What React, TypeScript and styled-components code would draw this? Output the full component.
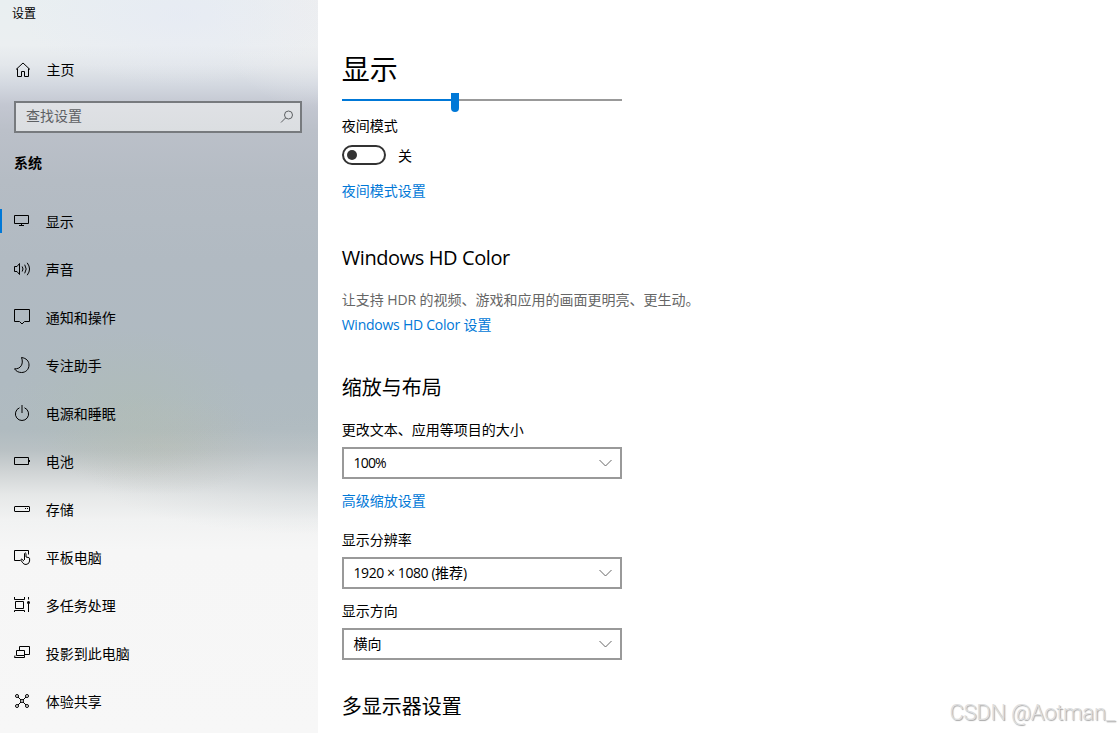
import React from "react";
import styled, { createGlobalStyle } from "styled-components";

const GlobalStyle = createGlobalStyle`
  * {
    box-sizing: border-box;
  }
  body {
    margin: 0;
    background: #fff;
    overflow: hidden;
    font-family: "Open Sans", "Noto Sans CJK SC", sans-serif;
    font-size: 14px;
    line-height: 20px;
    color: #000;
  }
`;

const Window = styled.div`
  display: flex;
  width: 1120px;
  height: 733px;
  overflow: hidden;
  position: relative;
  background: #fff;
`;

const Sidebar = styled.aside`
  width: 318px;
  height: 733px;
  flex: none;
  display: flex;
  flex-direction: column;
  font-family: "Noto Sans CJK SC", sans-serif;
  background:
    radial-gradient(ellipse 120px 75px at 130px 405px, rgba(176, 190, 176, 0.4), rgba(176, 190, 176, 0)),
    radial-gradient(ellipse 110px 50px at 160px 445px, rgba(186, 188, 176, 0.35), rgba(186, 188, 176, 0)),
    radial-gradient(ellipse 160px 70px at 180px 15px, rgba(229, 233, 245, 0.6), rgba(229, 233, 245, 0)),
    radial-gradient(ellipse 110px 110px at 318px 0, rgba(238, 238, 240, 0.8), rgba(238, 238, 240, 0)),
    radial-gradient(ellipse 240px 60px at 330px 475px, rgba(190, 198, 203, 0.4), rgba(190, 198, 203, 0)),
    linear-gradient(
      to bottom,
      #e9eff1 0,
      #ebeff1 45px,
      #e3e7eb 65px,
      #d3d8e0 85px,
      #c3c7d1 105px,
      #bbc0c9 130px,
      #b5bcc4 180px,
      #b1bac2 260px,
      #afbac1 380px,
      #b0bbc0 430px,
      #b9c1c4 450px,
      #d0d4d5 472px,
      #e6e8e8 495px,
      #f1f2f2 520px,
      #f6f6f6 550px,
      #f7f7f7 733px
    );
`;

const WindowTitle = styled.div`
  height: 28px;
  padding-left: 12px;
  font-size: 12px;
  line-height: 26px;
`;

const HomeLink = styled.div`
  display: flex;
  align-items: center;
  height: 24px;
  margin-top: 30px;
  padding-left: 14px;
  gap: 14.5px;
`;

const SearchBox = styled.div`
  display: flex;
  align-items: center;
  justify-content: space-between;
  width: 288px;
  height: 32px;
  margin: 19px 0 0 14px;
  padding: 0 4px 2px 10px;
  border: 2px solid #777a7e;
  background: linear-gradient(to bottom, #dfe1e5, #dbdee1);
  color: #5d6063;
`;

const GroupTitle = styled.div`
  margin: 19px 0 25px;
  padding-left: 14px;
  font-weight: 700;
`;

const NavItem = styled.div<{ $active?: boolean }>`
  display: flex;
  align-items: center;
  height: 48px;
  flex: none;
  gap: 13.7px;
  padding-left: 14px;
  background: ${({ $active }) =>
    $active ? "linear-gradient(#0078d7, #0078d7) 0 12px / 2px 24px no-repeat" : "none"};
`;

const NavLabel = styled.span<{ $raise?: number }>`
  margin-top: ${({ $raise = 1 }) => -$raise}px;
`;

const Icon = styled.svg<{ $muted?: boolean }>`
  width: 18px;
  height: 18px;
  flex: none;
  fill: none;
  stroke: ${({ $muted }) => ($muted ? "#5d6063" : "#000")};
  stroke-width: 1;
`;

const Content = styled.main`
  flex: 1;
  display: flex;
  flex-direction: column;
  align-items: flex-start;
  padding: 49px 0 0 23.7px;
`;

const PageTitle = styled.h1`
  margin: 0;
  font-size: 28px;
  font-weight: 400;
  line-height: 40px;
`;

const Slider = styled.div`
  display: flex;
  align-items: flex-start;
  width: 280px;
  height: 20px;
  margin: 4px 0 3px 0.3px;
`;

const SliderTrack = styled.div<{ $filled?: boolean }>`
  flex: ${({ $filled }) => ($filled ? "0 0 109px" : "1")};
  height: 2px;
  margin-top: 6px;
  background: ${({ $filled }) => ($filled ? "#0078d7" : "#999")};
`;

const SliderThumb = styled.div`
  width: 8px;
  height: 19px;
  border-radius: 0 0 4px 4px;
  background: #0078d7;
`;

const Text = styled.div<{ $top?: number; $muted?: boolean }>`
  height: 20px;
  margin-top: ${({ $top = 0 }) => $top}px;
  color: ${({ $muted }) => ($muted ? "#666" : "#000")};
  white-space: nowrap;
`;

const SettingLink = styled.a<{ $top: number }>`
  height: 20px;
  margin-top: ${({ $top }) => $top}px;
  color: #0078d7;
  white-space: nowrap;
`;

const Latin = styled.span<{ $spacing?: number }>`
  letter-spacing: ${({ $spacing = -0.2 }) => $spacing}px;
`;

const SectionTitle = styled.h2<{ $top: number }>`
  height: 28px;
  margin: ${({ $top }) => $top}px 0 0;
  font-size: 20px;
  font-weight: 400;
  line-height: 28px;
`;

const ToggleRow = styled.div`
  display: flex;
  align-items: center;
  gap: 12px;
  height: 20px;
  margin: 9px 0 0 0.3px;
`;

const Toggle = styled.div`
  display: flex;
  align-items: center;
  width: 44px;
  height: 20px;
  padding-left: 3px;
  border: 2px solid #333;
  border-radius: 10px;
`;

const ToggleKnob = styled.div`
  width: 10px;
  height: 10px;
  border-radius: 50%;
  background: #333;
`;

const ToggleState = styled.span`
  padding-top: 2px;
`;

const Select = styled.div`
  display: flex;
  align-items: center;
  justify-content: space-between;
  width: 280px;
  height: 32px;
  margin: 7px 0 0 0.3px;
  padding: 0 8px 0 9.5px;
  border: 2px solid #999;
`;

const Chevron = styled.svg`
  width: 13px;
  height: 8px;
  fill: none;
  stroke: #666;
`;

const Watermark = styled.div`
  position: absolute;
  right: 5px;
  bottom: 6px;
  font-family: Roboto, sans-serif;
  font-size: 22px;
  font-weight: 300;
  line-height: 28px;
  letter-spacing: -0.25px;
  color: #dedede;
  text-shadow: 1px 1px 1px #a4a4a4;
`;

const navItems = [
  {
    label: "显示",
    icon: <path d="M.5 3.5h14v8H.5zM7.5 12v1.5M5 13.5h5" />,
  },
  {
    label: "声音",
    icon: (
      <path d="M.5 6.5H3l2.5-3v11l-2.5-3H.5zM8.2 6.5q1.6 2.5 0 5M10.7 4.7q3 4.3 0 8.6M13.2 2.8q4.7 6.2 0 12.4" />
    ),
  },
  {
    label: "通知和操作",
    icon: <path d="M.5 1.5h15v12h-5L8 16l-2.5-2.5h-5z" />,
  },
  {
    label: "专注助手",
    icon: <path d="M7.5 1.5C12.5 2.2 15 5.2 15 9c0 4.5-3.3 7.5-7.5 7.5-3 0-5.5-1.3-7-3.7C6.5 13.3 10 8 7.5 1.5z" />,
  },
  {
    label: "电源和睡眠",
    icon: <path d="M5.5 3.8a6.6 6.6 0 1 0 5 0M8 1v8" />,
  },
  {
    label: "电池",
    icon: <path d="M.5 5.5h14v7H.5zM15.5 8v2" />,
  },
  {
    label: "存储",
    icon: (
      <>
        <rect x=".5" y="6.5" width="15" height="5" rx=".5" />
        <path d="M11 8.5h1M13 8.5h1" />
      </>
    ),
  },
  {
    label: "平板电脑",
    icon: (
      <path d="M6.5 12.5h-6v-10h14v4M10.5 12V5.500q.8-1.300 1.500 0V9l3 .7q.8.300.6 1.300v2q-.4 3.300-3.600 3.500-2.300 0-3.300-1.700L7 12.300q-.4-1.200.8-1.200l2.200 2" />
    ),
  },
  {
    label: "多任务处理",
    icon: (
      <>
        <path d="M.5 1v2.5h10V1M1.5 5.5h8v7h-8zM.5 16v-1.5h10V16M14.5 1v2.5M14.5 8v8" />
        <circle cx="14.5" cy="6.5" r="1.5" fill="#000" stroke="none" />
      </>
    ),
  },
  {
    label: "投影到此电脑",
    icon: <path d="M5.5 7V2.5h10v8H11M2.5 11.5v-5h8v5zM1 11.5l-.5 2h10v-2" />,
  },
  {
    label: "体验共享",
    icon: (
      <>
        <circle cx="3" cy="4" r="1.5" />
        <circle cx="13" cy="4" r="1.5" />
        <circle cx="3" cy="14" r="1.5" />
        <circle cx="13" cy="14" r="1.5" />
        <circle cx="8" cy="9" r="1.5" />
        <path d="M4 5l3 3M12 5L9 8M4 13l3-3M12 13l-3-3" />
      </>
    ),
  },
];

function Dropdown({ children }: { children: React.ReactNode }) {
  return (
    <Select>
      <span>{children}</span>
      <Chevron viewBox="0 0 13 8">
        <path d="M.5 1l6 6 6-6" />
      </Chevron>
    </Select>
  );
}

export default function App() {
  return (
    <>
      <GlobalStyle />
      <Window>
        <Sidebar>
          <WindowTitle>设置</WindowTitle>
          <HomeLink>
            <Icon viewBox="0 0 18 18">
              <path d="M2 8.500L9 2l7 6.500M3.500 7.500v8h4v-5h3v5h4v-8" />
            </Icon>
            <NavLabel $raise={2}>主页</NavLabel>
          </HomeLink>
          <SearchBox>
            <NavLabel $raise={2}>查找设置</NavLabel>
            <Icon $muted viewBox="0 0 18 18">
              <circle cx="10.500" cy="8" r="4" />
              <path d="M7.700 10.800L3 15.500" />
            </Icon>
          </SearchBox>
          <GroupTitle>系统</GroupTitle>
          {navItems.map((item, index) => (
            <NavItem key={item.label} $active={index === 0}>
              <Icon viewBox="0 0 18 18">{item.icon}</Icon>
              <NavLabel>{item.label}</NavLabel>
            </NavItem>
          ))}
        </Sidebar>

        <Content>
          <PageTitle>显示</PageTitle>
          <Slider>
            <SliderTrack $filled />
            <SliderThumb />
            <SliderTrack />
          </Slider>
          <Text>夜间模式</Text>
          <ToggleRow>
            <Toggle>
              <ToggleKnob />
            </Toggle>
            <ToggleState>关</ToggleState>
          </ToggleRow>
          <SettingLink $top={16}>夜间模式设置</SettingLink>

          <SectionTitle $top={43}>
            <Latin $spacing={-0.4}>Windows HD Color</Latin>
          </SectionTitle>
          <Text $top={18} $muted>
            让支持 <Latin>HDR</Latin> 的视频、游戏和应用的画面更明亮、更生动。
          </Text>
          <SettingLink $top={5}>
            <Latin $spacing={-0.25}>Windows HD Color</Latin> 设置
          </SettingLink>

          <SectionTitle $top={39}>缩放与布局</SectionTitle>
          <Text $top={18}>更改文本、应用等项目的大小</Text>
          <Dropdown>
            <Latin $spacing={-0.8}>100%</Latin>
          </Dropdown>
          <SettingLink $top={12}>高级缩放设置</SettingLink>
          <Text $top={19}>显示分辨率</Text>
          <Dropdown>
            <Latin $spacing={-0.42}>1920 × 1080 (</Latin>推荐<Latin>)</Latin>
          </Dropdown>
          <Text $top={12}>显示方向</Text>
          <Dropdown>横向</Dropdown>

          <SectionTitle $top={33}>多显示器设置</SectionTitle>
        </Content>
        <Watermark>CSDN @Aotman_</Watermark>
      </Window>
    </>
  );
}
